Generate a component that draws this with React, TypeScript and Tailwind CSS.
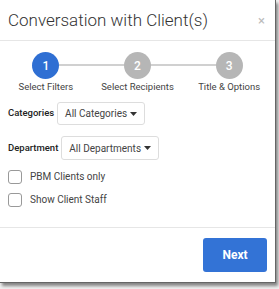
import React from "react";

function Caret() {
  return (
    <svg width="7" height="4" viewBox="0 0 7 4" className="ml-[3px] inline-block">
      <path d="M0 0 L7 0 L3.5 4 Z" fill="#333" />
    </svg>
  );
}

function Step({ n, label, active }: { n: number; label: string; active?: boolean }) {
  return (
    <div className="relative z-10 flex flex-col items-center">
      <div
        className={
          "flex h-[27px] w-[27px] items-center justify-center rounded-full text-[12px] font-medium text-white " +
          (active ? "bg-[#2f6fd3]" : "bg-[#b6b6b6]")
        }
      >
        {n}
      </div>
      <div className="mt-[2px] text-[9.5px] leading-[12px] text-[#444]">{label}</div>
    </div>
  );
}

export default function App() {
  return (
    <div className="h-[289px] w-[279px] bg-[#f0f0f0]" style={{ fontFamily: "Roboto, 'Liberation Sans', sans-serif" }}>
      <div className="flex h-[283px] w-[276px] flex-col border-r border-b border-[#666] bg-white shadow-[2px_3px_3px_rgba(0,0,0,0.45)]">
        <div className="flex h-[41px] items-center justify-between border-b border-[#e6e6e6] pl-[8px] pr-[10px]">
          <div className="text-[17px] font-light leading-none text-[#333]">Conversation with Client(s)</div>
          <div className="text-[13px] leading-none text-[#bbb]">×</div>
        </div>
        <div className="relative mt-[11px] grid grid-cols-3">
          <div className="absolute left-[46px] right-[46px] top-[12px] h-[2px] bg-[#d0d0d0]" />
          <Step n={1} label="Select Filters" active />
          <Step n={2} label="Select Recipients" />
          <Step n={3} label="Title & Options" />
        </div>
        <div className="mt-[9px] flex items-center pl-[8px]">
          <span className="text-[9.5px] font-medium text-[#222]">Categories</span>
          <div className="ml-[3px] flex h-[23px] items-center rounded-[3px] border border-[#ddd] px-[7px] text-[10px] text-[#444]">
            All Categories
            <Caret />
          </div>
        </div>
        <div className="mt-[11px] flex items-center pl-[8px]">
          <span className="text-[9.5px] font-medium text-[#222]">Department</span>
          <div className="ml-[3px] flex h-[24px] items-center rounded-[3px] border border-[#ddd] px-[7px] text-[10px] text-[#444]">
            All Departments
            <Caret />
          </div>
        </div>
        <div className="mt-[9px] flex items-center pl-[8px]">
          <div className="h-[14px] w-[14px] rounded-[3px] border border-[#999]" />
          <span className="ml-[8px] text-[10px] text-[#444]">PBM Clients only</span>
        </div>
        <div className="mt-[8px] flex items-center pl-[8px]">
          <div className="h-[14px] w-[14px] rounded-[3px] border border-[#999]" />
          <span className="ml-[8px] text-[10px] text-[#444]">Show Client Staff</span>
        </div>
        <div className="mt-auto flex h-[55px] items-center justify-end border-t border-[#e6e6e6] pr-[8px]">
          <button className="h-[34px] w-[64px] rounded-[3px] bg-[#3373d6] text-[12px] font-bold text-white">Next</button>
        </div>
      </div>
    </div>
  );
}
